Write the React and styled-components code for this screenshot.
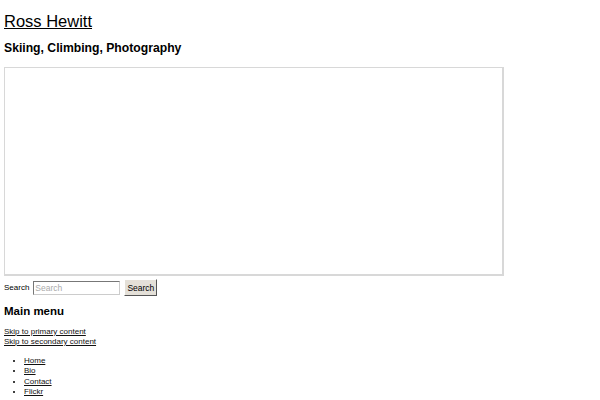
import styled, { createGlobalStyle } from 'styled-components'

const GlobalStyle = createGlobalStyle`
  body {
    margin: 0;
    padding: 0 4px;
    background: #fff;
    color: #000;
    font-family: "Liberation Sans", Arial, sans-serif;
  }
`

const Header = styled.header`
  padding-top: 11px;
`

const SiteTitle = styled.h1`
  margin: 0;
  font-size: 16.5px;
  font-weight: normal;
  line-height: 20px;

  a {
    color: #000;
    text-decoration: underline;
  }
`

const Tagline = styled.h2`
  margin: 9px 0 0;
  font-size: 12.2px;
  font-weight: bold;
  line-height: 16px;
`

const Frame = styled.div`
  margin-top: 11px;
  width: 500px;
  height: 209px;
  box-sizing: border-box;
  border: 1px solid #d8d8d8;
  border-right-width: 2px;
  border-bottom-width: 2px;
  background: #fff;
`

const SearchForm = styled.form`
  display: flex;
  align-items: center;
  gap: 4px;
  margin-top: 3px;
  font-size: 8px;
`

const SearchInput = styled.input`
  width: 83px;
  height: 12px;
  box-sizing: content-box;
  padding: 0 1px;
  border: 1px solid #777;
  border-right-color: #ccc;
  border-bottom-color: #ccc;
  font: 8.5px "Liberation Sans", Arial, sans-serif;

  &::placeholder {
    color: #aaa;
  }
`

const SearchButton = styled.button`
  width: 33px;
  height: 17px;
  padding: 0;
  background: #e4e0d8;
  border: 1px solid #fff;
  border-right-color: #555;
  border-bottom-color: #555;
  font: 8.5px "Liberation Sans", Arial, sans-serif;
  color: #000;
`

const Nav = styled.nav`
  margin-top: 8px;
`

const MenuTitle = styled.h3`
  margin: 0;
  font-size: 11.5px;
  font-weight: bold;
  line-height: 14px;
`

const SkipLinks = styled.div`
  margin-top: 9px;
  display: flex;
  flex-direction: column;
  font-size: 8px;
  line-height: 10px;

  a {
    color: #111;
  }
`

const Menu = styled.ul`
  margin: 9px 0 0;
  padding-left: 20px;
  font-size: 8px;
  line-height: 10.4px;
  list-style: disc;

  a {
    color: #111;
  }
`

const menuItems = ['Home', 'Bio', 'Contact', 'Flickr', 'Links & Videos']

export default function App() {
  return (
    <>
      <GlobalStyle />
      <Header>
        <SiteTitle><a href="#">Ross Hewitt</a></SiteTitle>
        <Tagline>Skiing, Climbing, Photography</Tagline>
      </Header>
      <Frame />
      <SearchForm onSubmit={e => e.preventDefault()}>
        <label htmlFor="s">Search</label>
        <SearchInput id="s" type="text" placeholder="Search" />
        <SearchButton type="submit">Search</SearchButton>
      </SearchForm>
      <Nav>
        <MenuTitle>Main menu</MenuTitle>
        <SkipLinks>
          <a href="#content">Skip to primary content</a>
          <a href="#secondary">Skip to secondary content</a>
        </SkipLinks>
        <Menu>
          {menuItems.map(item => (
            <li key={item}><a href="#">{item}</a></li>
          ))}
        </Menu>
      </Nav>
    </>
  )
}
